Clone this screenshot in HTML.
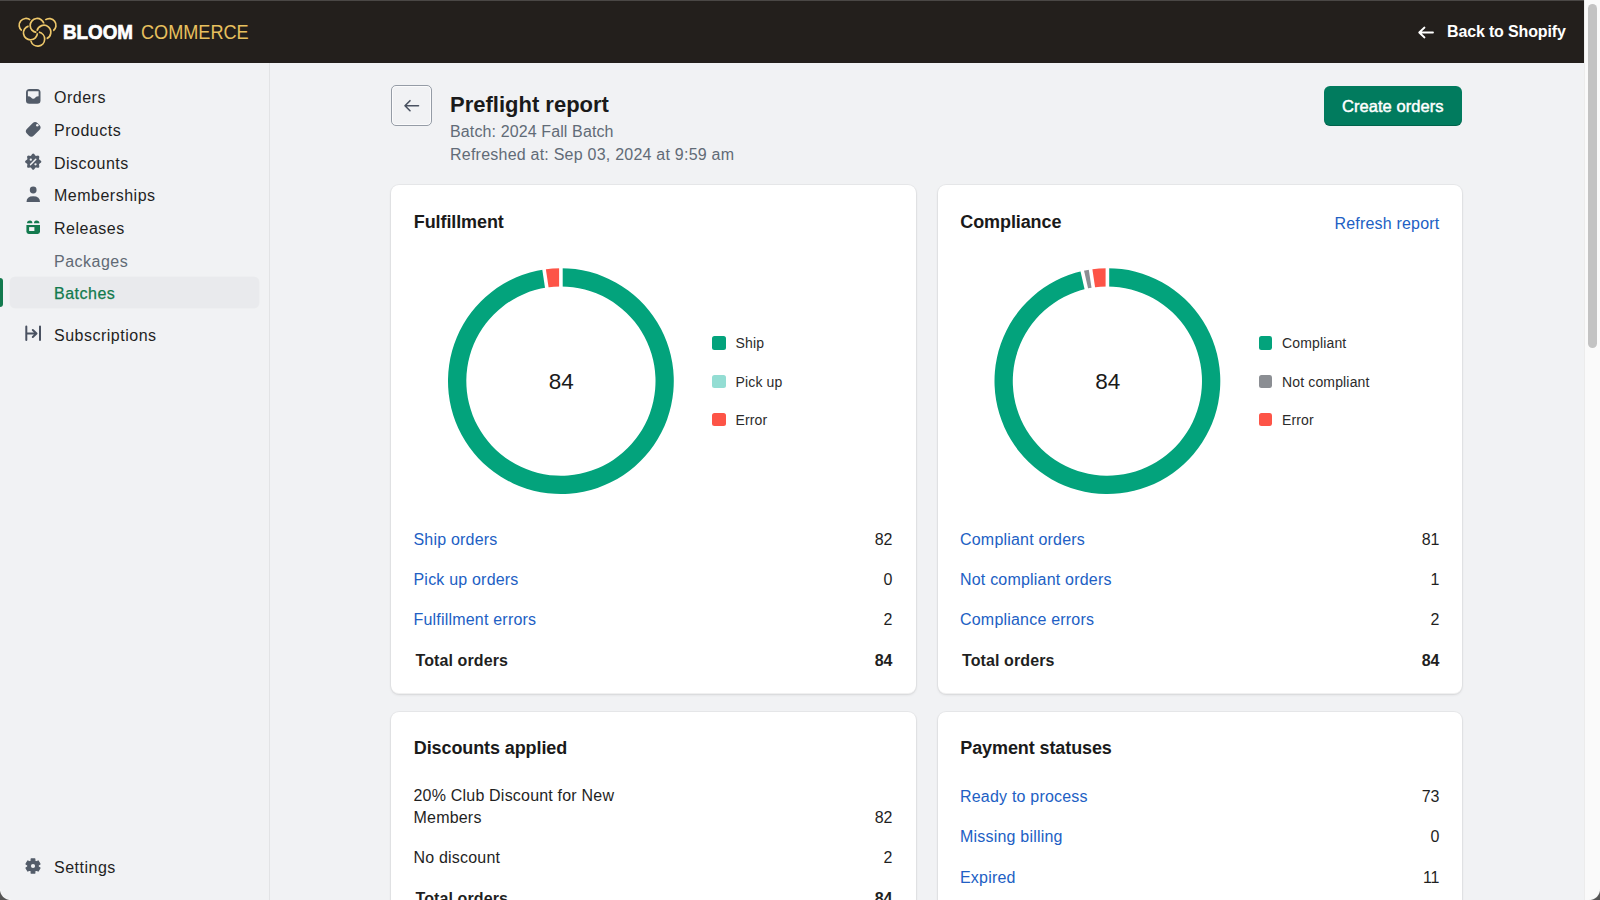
<!DOCTYPE html>
<html><head><meta charset="utf-8">
<style>
*{box-sizing:border-box;margin:0;padding:0}
html,body{width:1600px;height:900px;overflow:hidden;background:#f1f2f4;font-family:"Liberation Sans",sans-serif;color:#303030}
.abs{position:absolute}
#hdr{position:absolute;left:0;top:0;width:1584px;height:63px;background:#231f1c;border-top:1px solid #4a4745}
#sb{position:absolute;left:0;top:63px;width:270px;height:837px;background:#f1f2f4;border-right:1px solid #e2e3e5}
.nav{position:absolute;left:54px;font-size:16px;letter-spacing:0.5px;color:#1f1f1f;line-height:20px;margin-top:1.5px}
.nav.sub{color:#616a75}
.nav.act{color:#137a4e}
.ico{position:absolute;left:24px;width:18px;height:18px}
#scroll{position:absolute;left:1584px;top:0;width:16px;height:900px;background:#fafafa;border-left:1px solid #ececec}
#thumb{position:absolute;left:1588px;top:4px;width:9px;height:344px;background:#c3c3c3;border-radius:5px}
.card{position:absolute;background:#fff;border-radius:8px;box-shadow:inset 0 -1px 0 rgba(0,0,0,.06),0 1px 3px rgba(0,0,0,.09),0 0 0 1px rgba(0,0,0,.035)}
.ctitle{position:absolute;left:23px;font-size:17.5px;font-weight:700;color:#202020}
.row{position:absolute;left:23px;right:23px;font-size:16px;line-height:22px}
.row .l{color:#2463bc}
.row .v{position:absolute;right:0;top:0;color:#303030}
.row.tot .l,.row.tot .v{color:#202020;font-weight:700}
.leg{position:absolute;font-size:14px;color:#303030;line-height:16px}
.leg i{position:absolute;left:0;top:1px;width:13.5px;height:13.5px;border-radius:2.5px}
.leg span{position:absolute;left:23px;top:0;white-space:nowrap}
</style></head>
<body>
<div id="hdr">
<svg class="abs" style="left:0;top:0" width="70" height="62" viewBox="0 0 70 62"><g fill="none" stroke-linecap="butt"><path d="M30.25 18.9A6.6 6.6 0 1 0 21.8 29.7" stroke="#231f1c" stroke-width="3.6"/><path d="M30.25 18.9A6.6 6.6 0 1 0 21.8 29.7" stroke="#edc76a" stroke-width="1.7"/><path d="M43.97 22.76A7 7 0 1 0 36.37 31.42" stroke="#231f1c" stroke-width="3.6"/><path d="M43.97 22.76A7 7 0 1 0 36.37 31.42" stroke="#edc76a" stroke-width="1.7"/><path d="M45.24 18.9A6.6 6.6 0 1 1 53.26 29.7" stroke="#231f1c" stroke-width="3.6"/><path d="M45.24 18.9A6.6 6.6 0 1 1 53.26 29.7" stroke="#edc76a" stroke-width="1.7"/><path d="M28.56 25.09A7 7 0 1 0 37.43 32.26" stroke="#231f1c" stroke-width="3.6"/><path d="M28.56 25.09A7 7 0 1 0 37.43 32.26" stroke="#edc76a" stroke-width="1.7"/><path d="M37 29.73A7 7 0 1 1 46.5 37.75" stroke="#231f1c" stroke-width="3.6"/><path d="M37 29.73A7 7 0 1 1 46.5 37.75" stroke="#edc76a" stroke-width="1.7"/><path d="M38.9 31.2A7 7 0 1 1 30.9 39.86" stroke="#231f1c" stroke-width="3.6"/><path d="M38.9 31.2A7 7 0 1 1 30.9 39.86" stroke="#edc76a" stroke-width="1.7"/></g></svg>
<div class="abs" style="left:63px;top:19px;font-size:20px;font-weight:700;color:#fff;line-height:24px;transform-origin:0 0;transform:scaleX(0.94);-webkit-text-stroke:0.7px #fff">BLOOM</div>
<div class="abs" style="left:141px;top:19px;font-size:20px;color:#e8c05e;line-height:24px;transform-origin:0 0;transform:scaleX(0.905)">COMMERCE</div>
<svg class="abs" style="left:1416px;top:24px" width="20" height="16" viewBox="0 0 20 16"><path d="M17 7.5H3.5M8.5 2.5L3.2 7.5L8.5 12.5" fill="none" stroke="#fff" stroke-width="1.8" stroke-linecap="round" stroke-linejoin="round"/></svg>
<div class="abs" style="left:1447px;top:21.4px;font-size:16px;font-weight:700;color:#fff;line-height:20px;letter-spacing:-0.15px">Back to Shopify</div>
</div>
<div id="sb">
<div class="abs" style="left:10px;top:214px;width:249px;height:31px;background:#e9eaed;border-radius:5px;box-shadow:0 0 0 0.5px rgba(0,0,0,.025)"></div>
<div class="abs" style="left:0;top:215px;width:3px;height:29px;background:#137a4e;border-radius:0 3px 3px 0"></div>
</div>
<div class="nav" style="top:86px">Orders</div>
<div class="nav" style="top:119px">Products</div>
<div class="nav" style="top:152px">Discounts</div>
<div class="nav" style="top:184px">Memberships</div>
<div class="nav" style="top:217px">Releases</div>
<div class="nav sub" style="top:250px">Packages</div>
<div class="nav act" style="top:282px;-webkit-text-stroke:0.25px #137a4e">Batches</div>
<div class="nav" style="top:324px">Subscriptions</div>
<div class="nav" style="top:856px">Settings</div>
<svg class="abs" style="left:0;top:63px" width="60" height="837" viewBox="0 63 60 837">
<g fill="#535c69">
<path d="M26 92.5Q26 89 29.5 89H37Q40.5 89 40.5 92.5V100.5Q40.5 103.8 37.2 103.8H29.3Q26 103.8 26 100.5Z"/>
<path d="M27.9 91.3H38.6V96.3Q36.4 96.3 35.4 97.6Q34.5 98.8 33.25 98.8Q32 98.8 31.1 97.6Q30.1 96.3 27.9 96.3Z" fill="#f1f2f4"/>
<rect x="25.7" y="124.6" width="15" height="9.6" rx="3.6" transform="rotate(-45 33.2 129.4)"/><circle cx="37.3" cy="125.3" r="1.25" fill="#f1f2f4"/>
<path d="M33.20 153.55L33.73 153.69L34.21 154.07L34.61 154.59L34.96 155.13L35.28 155.57L35.63 155.83L36.06 155.90L36.60 155.81L37.23 155.67L37.89 155.59L38.49 155.66L38.96 155.94L39.24 156.41L39.31 157.01L39.23 157.67L39.09 158.30L39.00 158.84L39.07 159.27L39.33 159.62L39.77 159.94L40.31 160.29L40.83 160.69L41.21 161.17L41.35 161.70L41.21 162.23L40.83 162.71L40.31 163.11L39.77 163.46L39.33 163.78L39.07 164.13L39.00 164.56L39.09 165.10L39.23 165.73L39.31 166.39L39.24 166.99L38.96 167.46L38.49 167.74L37.89 167.81L37.23 167.73L36.60 167.59L36.06 167.50L35.63 167.57L35.28 167.83L34.96 168.27L34.61 168.81L34.21 169.33L33.73 169.71L33.20 169.85L32.67 169.71L32.19 169.33L31.79 168.81L31.44 168.27L31.12 167.83L30.77 167.57L30.34 167.50L29.80 167.59L29.17 167.73L28.51 167.81L27.91 167.74L27.44 167.46L27.16 166.99L27.09 166.39L27.17 165.73L27.31 165.10L27.40 164.56L27.33 164.13L27.07 163.78L26.63 163.46L26.09 163.11L25.57 162.71L25.19 162.23L25.05 161.70L25.19 161.17L25.57 160.69L26.09 160.29L26.63 159.94L27.07 159.62L27.33 159.27L27.40 158.84L27.31 158.30L27.17 157.67L27.09 157.01L27.16 156.41L27.44 155.94L27.91 155.66L28.51 155.59L29.17 155.67L29.80 155.81L30.34 155.90L30.77 155.83L31.12 155.57L31.44 155.13L31.79 154.59L32.19 154.07L32.67 153.69Z"/>
<circle cx="33.2" cy="190" r="3.4"/>
<path d="M26.5 202Q26.5 196.3 33.2 196.3Q40 196.3 40 202Z"/>
<path d="M26.3 326.5V340M40 326.5V340M26.5 333.5H36.3M32.8 330L36.5 333.5L32.8 337" fill="none" stroke="#4a5261" stroke-width="2" stroke-linecap="round" stroke-linejoin="round"/>
</g>
<g stroke="#f1f2f4" stroke-width="1.5" stroke-linecap="round"><path d="M30.6 164.6L35.8 159.2"/></g>
<g fill="#f1f2f4"><circle cx="30.8" cy="159.7" r="1.15"/><circle cx="35.5" cy="164.3" r="1.15"/></g>
<g fill="#137a4e">
<path d="M26.4 224.9H40V231.6Q40 233.9 37.7 233.9H28.7Q26.4 233.9 26.4 231.6Z"/>
<path d="M27 223.2Q27 220.5 30 220.5Q32.4 220.5 32.4 223.2ZM34 223.2Q34 220.5 36.4 220.5Q39.4 220.5 39.4 223.2Z"/>
</g>
<rect x="29.1" y="227.1" width="5.3" height="3.9" fill="#f1f2f4"/>
<g transform="translate(33 866)" fill="#535c69"><path d="M-1.95 -4.82 L-1.77 -7.08 L1.77 -7.08 L1.95 -4.82 L3.20 -4.10 L5.25 -5.07 L7.02 -2.01 L5.15 -0.72 L5.15 0.72 L7.02 2.01 L5.25 5.07 L3.20 4.10 L1.95 4.82 L1.77 7.08 L-1.77 7.08 L-1.95 4.82 L-3.20 4.10 L-5.25 5.07 L-7.02 2.01 L-5.15 0.72 L-5.15 -0.72 L-7.02 -2.01 L-5.25 -5.07 L-3.20 -4.10Z" stroke="#535c69" stroke-width="1.2" stroke-linejoin="round"/><circle r="2.1" fill="#f1f2f4"/></g>
</svg>

<!-- page header -->
<div class="abs" style="left:391px;top:85px;width:41px;height:41px;border:1px solid #959ca6;border-radius:5px;background:#f1f2f4;box-shadow:inset 0 0 0 1px #fbfbfc"></div>
<svg class="abs" style="left:400px;top:96px" width="22" height="20" viewBox="0 0 22 20"><path d="M18.5 9.7H5.3M10 4.7L5 9.7L10 14.7" fill="none" stroke="#4a5261" stroke-width="1.6" stroke-linecap="round" stroke-linejoin="round"/></svg>
<div class="abs" style="left:450px;top:92px;font-size:22px;font-weight:700;color:#1a1a1a;line-height:26px">Preflight report</div>
<div class="abs" style="left:450px;top:121.5px;font-size:16px;color:#616b77;line-height:20px;letter-spacing:0.12px">Batch: 2024 Fall Batch</div>
<div class="abs" style="left:450px;top:144.8px;font-size:16px;color:#616b77;line-height:20px;letter-spacing:0.23px">Refreshed at: Sep 03, 2024 at 9:59 am</div>
<div class="abs" style="left:1324px;top:86px;width:138px;height:40px;background:#017b5e;border-radius:6px;box-shadow:inset 0 -1px 0 rgba(0,0,0,.2)"></div>
<div class="abs" style="left:1342px;top:95.5px;font-size:16.5px;font-weight:400;color:#fff;line-height:20px;-webkit-text-stroke:0.45px #fff;letter-spacing:0.05px">Create orders</div>
<!-- CARDS --><div class="card" style="left:391px;top:185px;width:525px;height:509px"></div>
<div class="card" style="left:938px;top:185px;width:524px;height:509px"></div>
<div class="card" style="left:391px;top:712px;width:525px;height:260px"></div>
<div class="card" style="left:938px;top:712px;width:524px;height:260px"></div>
<div class="abs" style="left:413.8px;top:210.76px;font-size:18px;font-weight:700;color:#1a1a1a;line-height:22px;letter-spacing:-0.1px;white-space:nowrap;">Fulfillment</div>
<div class="abs" style="left:960.3px;top:210.76px;font-size:18px;font-weight:700;color:#1a1a1a;line-height:22px;letter-spacing:-0.1px;white-space:nowrap;">Compliance</div>
<div class="abs" style="right:160.5px;top:212.96px;font-size:16px;font-weight:400;color:#2160c4;line-height:22px;letter-spacing:0.2px;white-space:nowrap;">Refresh report</div>
<div class="abs" style="left:413.8px;top:737.26px;font-size:18px;font-weight:700;color:#1a1a1a;line-height:22px;letter-spacing:-0.1px;white-space:nowrap;">Discounts applied</div>
<div class="abs" style="left:960.3px;top:737.26px;font-size:18px;font-weight:700;color:#1a1a1a;line-height:22px;letter-spacing:-0.1px;white-space:nowrap;">Payment statuses</div>
<svg class="abs" style="left:0;top:0;overflow:visible" width="1600" height="900"><path d="M560.90 268.20A112.9 112.9 0 1 1 544.07 269.46L546.80 287.56A94.6 94.6 0 1 0 560.90 286.50Z" fill="#03a37c"/><path d="M544.07 269.46A112.9 112.9 0 0 1 560.90 268.20L560.90 286.50A94.6 94.6 0 0 0 546.80 287.56Z" fill="#fd5447"/><path d="M560.90 289.50L560.90 265.20" stroke="#fff" stroke-width="3.6"/><path d="M547.25 290.52L543.63 266.49" stroke="#fff" stroke-width="3.6"/><path d="M1107.40 268.20A112.9 112.9 0 1 1 1082.28 271.03L1086.35 288.87A94.6 94.6 0 1 0 1107.40 286.50Z" fill="#03a37c"/><path d="M1082.28 271.03A112.9 112.9 0 0 1 1090.57 269.46L1093.30 287.56A94.6 94.6 0 0 0 1086.35 288.87Z" fill="#8b8e93"/><path d="M1090.57 269.46A112.9 112.9 0 0 1 1107.40 268.20L1107.40 286.50A94.6 94.6 0 0 0 1093.30 287.56Z" fill="#fd5447"/><path d="M1107.40 289.50L1107.40 265.20" stroke="#fff" stroke-width="3.6"/><path d="M1087.02 291.80L1081.61 268.11" stroke="#fff" stroke-width="3.6"/><path d="M1093.75 290.52L1090.13 266.49" stroke="#fff" stroke-width="3.6"/></svg>
<div class="abs" style="left:561.3px;top:371.00px;font-size:22.5px;font-weight:400;color:#1a1a1a;line-height:22px;letter-spacing:0px;white-space:nowrap;width:60px;margin-left:-30px;text-align:center">84</div>
<div class="abs" style="left:1107.8px;top:371.00px;font-size:22.5px;font-weight:400;color:#1a1a1a;line-height:22px;letter-spacing:0px;white-space:nowrap;width:60px;margin-left:-30px;text-align:center">84</div>
<div class="abs" style="left:712px;top:336.25px;width:13.5px;height:13.5px;border-radius:2.5px;background:#03a37c"></div><div class="abs" style="left:735.5px;top:334.35px;font-size:14px;font-weight:400;color:#2b2b2b;line-height:18px;letter-spacing:0.15px;white-space:nowrap;">Ship</div><div class="abs" style="left:712px;top:374.65px;width:13.5px;height:13.5px;border-radius:2.5px;background:#93ddd3"></div><div class="abs" style="left:735.5px;top:372.75px;font-size:14px;font-weight:400;color:#2b2b2b;line-height:18px;letter-spacing:0.15px;white-space:nowrap;">Pick up</div><div class="abs" style="left:712px;top:412.95px;width:13.5px;height:13.5px;border-radius:2.5px;background:#fd5447"></div><div class="abs" style="left:735.5px;top:411.05px;font-size:14px;font-weight:400;color:#2b2b2b;line-height:18px;letter-spacing:0.15px;white-space:nowrap;">Error</div>
<div class="abs" style="left:1258.5px;top:336.25px;width:13.5px;height:13.5px;border-radius:2.5px;background:#03a37c"></div><div class="abs" style="left:1282.0px;top:334.35px;font-size:14px;font-weight:400;color:#2b2b2b;line-height:18px;letter-spacing:0.15px;white-space:nowrap;">Compliant</div><div class="abs" style="left:1258.5px;top:374.65px;width:13.5px;height:13.5px;border-radius:2.5px;background:#8b8e93"></div><div class="abs" style="left:1282.0px;top:372.75px;font-size:14px;font-weight:400;color:#2b2b2b;line-height:18px;letter-spacing:0.15px;white-space:nowrap;">Not compliant</div><div class="abs" style="left:1258.5px;top:412.95px;width:13.5px;height:13.5px;border-radius:2.5px;background:#fd5447"></div><div class="abs" style="left:1282.0px;top:411.05px;font-size:14px;font-weight:400;color:#2b2b2b;line-height:18px;letter-spacing:0.15px;white-space:nowrap;">Error</div>
<div class="abs" style="left:413.5px;top:528.56px;font-size:16px;font-weight:400;color:#2160c4;line-height:22px;letter-spacing:0.2px;white-space:nowrap;">Ship orders</div><div class="abs" style="right:707.5px;top:528.56px;font-size:16px;font-weight:400;color:#1f1f1f;line-height:22px;letter-spacing:0px;white-space:nowrap;">82</div><div class="abs" style="left:413.5px;top:569.06px;font-size:16px;font-weight:400;color:#2160c4;line-height:22px;letter-spacing:0.2px;white-space:nowrap;">Pick up orders</div><div class="abs" style="right:707.5px;top:569.06px;font-size:16px;font-weight:400;color:#1f1f1f;line-height:22px;letter-spacing:0px;white-space:nowrap;">0</div><div class="abs" style="left:413.5px;top:609.36px;font-size:16px;font-weight:400;color:#2160c4;line-height:22px;letter-spacing:0.2px;white-space:nowrap;">Fulfillment errors</div><div class="abs" style="right:707.5px;top:609.36px;font-size:16px;font-weight:400;color:#1f1f1f;line-height:22px;letter-spacing:0px;white-space:nowrap;">2</div><div class="abs" style="left:415.5px;top:649.96px;font-size:16px;font-weight:700;color:#1f1f1f;line-height:22px;letter-spacing:0.1px;white-space:nowrap;">Total orders</div><div class="abs" style="right:707.5px;top:649.96px;font-size:16px;font-weight:700;color:#1f1f1f;line-height:22px;letter-spacing:0px;white-space:nowrap;">84</div>
<div class="abs" style="left:960.0px;top:528.56px;font-size:16px;font-weight:400;color:#2160c4;line-height:22px;letter-spacing:0.2px;white-space:nowrap;">Compliant orders</div><div class="abs" style="right:160.5px;top:528.56px;font-size:16px;font-weight:400;color:#1f1f1f;line-height:22px;letter-spacing:0px;white-space:nowrap;">81</div><div class="abs" style="left:960.0px;top:569.06px;font-size:16px;font-weight:400;color:#2160c4;line-height:22px;letter-spacing:0.2px;white-space:nowrap;">Not compliant orders</div><div class="abs" style="right:160.5px;top:569.06px;font-size:16px;font-weight:400;color:#1f1f1f;line-height:22px;letter-spacing:0px;white-space:nowrap;">1</div><div class="abs" style="left:960.0px;top:609.36px;font-size:16px;font-weight:400;color:#2160c4;line-height:22px;letter-spacing:0.2px;white-space:nowrap;">Compliance errors</div><div class="abs" style="right:160.5px;top:609.36px;font-size:16px;font-weight:400;color:#1f1f1f;line-height:22px;letter-spacing:0px;white-space:nowrap;">2</div><div class="abs" style="left:962.0px;top:649.96px;font-size:16px;font-weight:700;color:#1f1f1f;line-height:22px;letter-spacing:0.1px;white-space:nowrap;">Total orders</div><div class="abs" style="right:160.5px;top:649.96px;font-size:16px;font-weight:700;color:#1f1f1f;line-height:22px;letter-spacing:0px;white-space:nowrap;">84</div>
<div class="abs" style="left:413.5px;top:784.96px;font-size:16px;font-weight:400;color:#1f1f1f;line-height:22px;letter-spacing:0.2px;white-space:nowrap;">20% Club Discount for New</div>
<div class="abs" style="left:413.5px;top:807.26px;font-size:16px;font-weight:400;color:#1f1f1f;line-height:22px;letter-spacing:0.2px;white-space:nowrap;">Members</div>
<div class="abs" style="right:707.5px;top:807.26px;font-size:16px;font-weight:400;color:#1f1f1f;line-height:22px;letter-spacing:0px;white-space:nowrap;">82</div>
<div class="abs" style="left:413.5px;top:847.26px;font-size:16px;font-weight:400;color:#1f1f1f;line-height:22px;letter-spacing:0.2px;white-space:nowrap;">No discount</div>
<div class="abs" style="right:707.5px;top:847.26px;font-size:16px;font-weight:400;color:#1f1f1f;line-height:22px;letter-spacing:0px;white-space:nowrap;">2</div>
<div class="abs" style="left:415.5px;top:887.76px;font-size:16px;font-weight:700;color:#1f1f1f;line-height:22px;letter-spacing:0.1px;white-space:nowrap;">Total orders</div>
<div class="abs" style="right:707.5px;top:887.76px;font-size:16px;font-weight:700;color:#1f1f1f;line-height:22px;letter-spacing:0px;white-space:nowrap;">84</div>
<div class="abs" style="left:960.0px;top:785.66px;font-size:16px;font-weight:400;color:#2160c4;line-height:22px;letter-spacing:0.2px;white-space:nowrap;">Ready to process</div>
<div class="abs" style="right:160.5px;top:785.66px;font-size:16px;font-weight:400;color:#1f1f1f;line-height:22px;letter-spacing:0px;white-space:nowrap;">73</div>
<div class="abs" style="left:960.0px;top:826.16px;font-size:16px;font-weight:400;color:#2160c4;line-height:22px;letter-spacing:0.2px;white-space:nowrap;">Missing billing</div>
<div class="abs" style="right:160.5px;top:826.16px;font-size:16px;font-weight:400;color:#1f1f1f;line-height:22px;letter-spacing:0px;white-space:nowrap;">0</div>
<div class="abs" style="left:960.0px;top:866.66px;font-size:16px;font-weight:400;color:#2160c4;line-height:22px;letter-spacing:0.2px;white-space:nowrap;">Expired</div>
<div class="abs" style="right:160.5px;top:866.66px;font-size:16px;font-weight:400;color:#1f1f1f;line-height:22px;letter-spacing:0px;white-space:nowrap;">11</div><!-- /CARDS -->
<div id="scroll"></div><div id="thumb"></div>
<div class="abs" style="left:0;top:889px;width:11px;height:11px;background:radial-gradient(circle at 11px 0,rgba(0,0,0,0) 10px,#f4f4f4 10.6px,#555 11.6px)"></div>
<div class="abs" style="left:1589px;top:889px;width:11px;height:11px;background:radial-gradient(circle at 0 0,rgba(0,0,0,0) 10px,#f4f4f4 10.6px,#555 11.6px)"></div>
</body></html>
